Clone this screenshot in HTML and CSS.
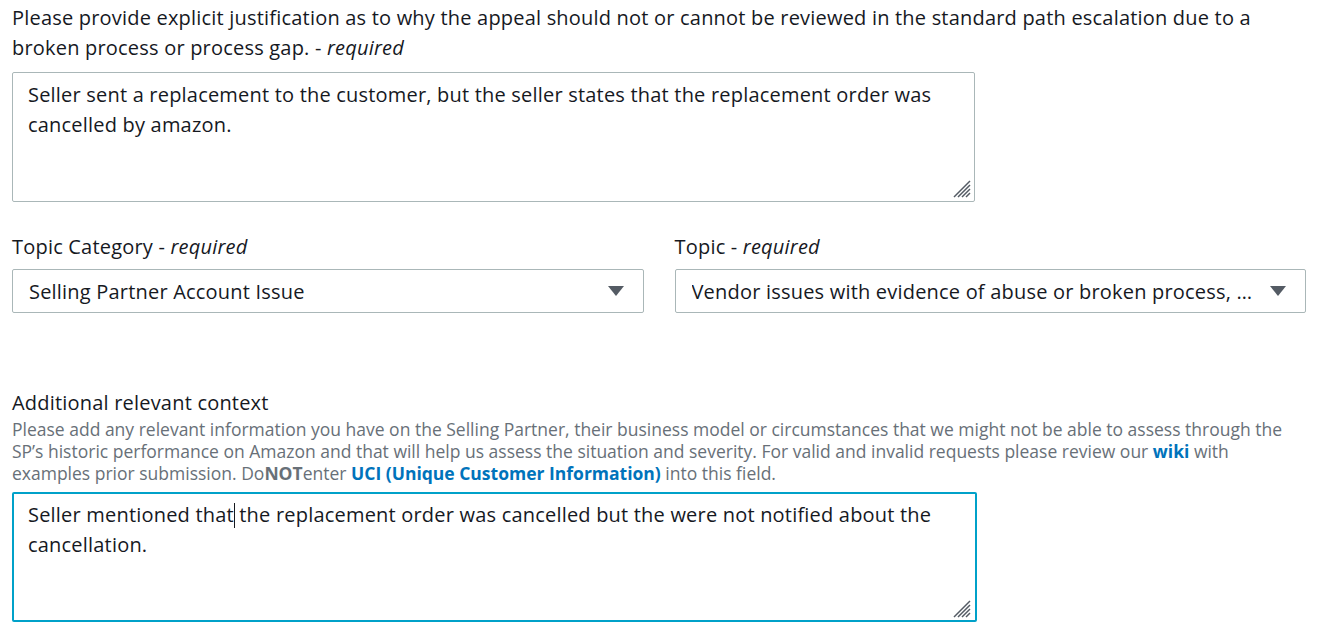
FILE: index.html
```html
<!DOCTYPE html>
<html lang="en">
<head>
    <meta charset="UTF-8">
    <meta name="viewport" content="width=device-width, initial-scale=1.0">
    <title>Appeal escalation</title>
    <link rel="stylesheet" href="styles.css">
</head>
<body>
    <form class="form">
        <div class="field">
            <label class="label" for="justification">Please provide explicit justification as to why the appeal should not or cannot be reviewed in the standard path escalation due to a broken process or process gap. - <i>required</i></label>
            <div class="textarea-wrap">
                <textarea id="justification" class="textarea">Seller sent a replacement to the customer, but the seller states that the replacement order was cancelled by amazon.</textarea>
                <svg class="grip" width="22" height="22" viewBox="0 0 22 22">
                    <path d="M20 4 L4 20 M20 8 L8 20 M20 12 L12 20 M20 16 L16 20" stroke="#545b64" stroke-width="1.5"/>
                </svg>
            </div>
        </div>

        <div class="row">
            <div class="field">
                <div class="label">Topic Category - <i>required</i></div>
                <div class="select" role="combobox">
                    <span class="select-text">Selling Partner Account Issue</span>
                    <svg class="caret" width="16" height="10" viewBox="0 0 16 10"><path d="M0 0 H16 L8 10 Z" fill="#545b64"/></svg>
                </div>
            </div>
            <div class="field">
                <div class="label">Topic - <i>required</i></div>
                <div class="select" role="combobox">
                    <span class="select-text">Vendor issues with evidence of abuse or broken process, as per the escalation criteria</span>
                    <svg class="caret" width="16" height="10" viewBox="0 0 16 10"><path d="M0 0 H16 L8 10 Z" fill="#545b64"/></svg>
                </div>
            </div>
        </div>

        <div class="field field-context">
            <div class="label label-single">Additional relevant context</div>
            <p class="hint">Please add any relevant information you have on the Selling Partner, their business model or circumstances that we might not be able to assess through the SP’s historic performance on Amazon and that will help us assess the situation and severity. For valid and invalid requests please review our <a href="#">wiki</a> with examples prior submission. Do<b>NOT</b>enter <a href="#">UCI (Unique Customer Information)</a> into this field.</p>
            <div class="textarea-wrap">
                <!-- focused box, cursor sits after "that" -->
                <div class="textarea active" role="textbox" aria-multiline="true">Seller mentioned that<span class="cursor"></span> the replacement order was cancelled but the were not notified about the cancellation.</div>
                <svg class="grip" width="22" height="22" viewBox="0 0 22 22">
                    <path d="M20 4 L4 20 M20 8 L8 20 M20 12 L12 20 M20 16 L16 20" stroke="#545b64" stroke-width="1.5"/>
                </svg>
            </div>
        </div>
    </form>
</body>
</html>
```

FILE: styles.css
```css
body {
    margin: 0;
    padding: 3px 12px 0;
    font-family: "Open Sans", "Liberation Sans", sans-serif;
    color: #16191f;
    background: #fff;
    overflow: hidden;
}
.form {
    width: 1294px;
}
.label {
    display: block;
    font-size: 20px;
    letter-spacing: 0.2px;
    line-height: 30px;
}
.label i {
    font-style: italic;
}
.textarea-wrap {
    position: relative;
    width: 963px;
    margin-top: 9px;
}
.textarea {
    display: block;
    box-sizing: border-box;
    width: 100%;
    height: 130px;
    padding: 7px 15px;
    border: 1px solid #aab7b8;
    border-radius: 2px;
    font-family: inherit;
    font-size: 20px;
    letter-spacing: 0.2px;
    line-height: 30px;
    color: #16191f;
    resize: none;
    outline: none;
}
.textarea.active {
    width: 965px;
    border: 2px solid #00a1c9;
    padding: 6px 14px;
}
.cursor {
    display: inline-block;
    width: 1px;
    height: 25px;
    margin: 0 -1px 0 0;
    vertical-align: -6px;
    background: #16191f;
}
.grip {
    position: absolute;
    right: 3px;
    bottom: 3px;
    pointer-events: none;
}
.row {
    display: grid;
    grid-template-columns: minmax(0, 1fr) minmax(0, 1fr);
    gap: 31px;
    margin-top: 30px;
}
.row .label {
    margin-bottom: 7px;
}
.select {
    display: flex;
    align-items: center;
    gap: 14px;
    box-sizing: border-box;
    height: 44px;
    padding: 0 19px 0 16px;
    border: 1px solid #aab7b8;
    border-radius: 2px;
    font-size: 20px;
    letter-spacing: 0.2px;
}
.select-text {
    flex: 1;
    min-width: 0;
    white-space: nowrap;
    overflow: hidden;
    text-overflow: ellipsis;
}
.caret {
    flex: none;
}
.field-context {
    margin-top: 75px;
}
.hint {
    margin: 0;
    font-size: 17.5px;
    line-height: 22px;
    color: #687078;
}
.hint b {
    font-weight: bold;
}
.hint a {
    color: #0073bb;
    font-weight: bold;
    text-decoration: none;
}
.field-context .textarea-wrap {
    margin-top: 8px;
}
```
